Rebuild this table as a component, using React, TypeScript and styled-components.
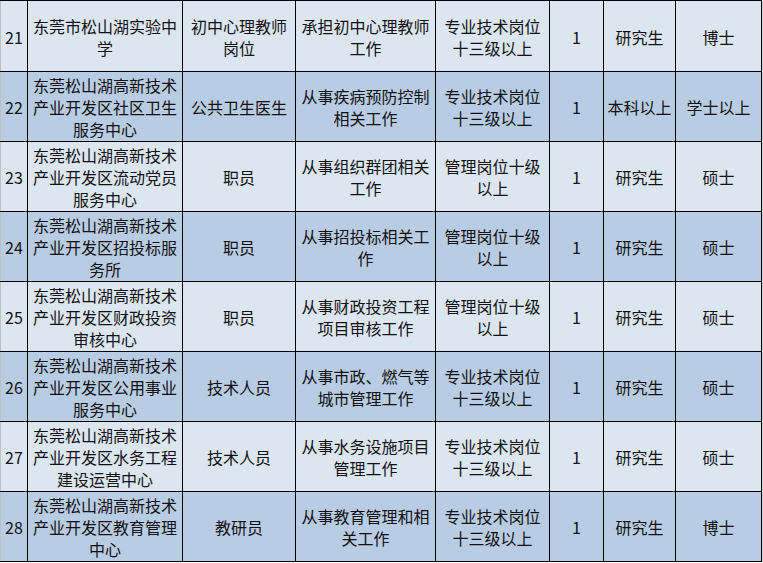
import React, { FC } from "react";
import styled, { createGlobalStyle } from "styled-components";

const GlobalStyle = createGlobalStyle`
  html, body {
    margin: 0;
    padding: 0;
    background: #ffffff;
  }
  body {
    font-family: "Noto Sans CJK SC", "Noto Sans", sans-serif;
    color: #111111;
  }
`;

const columns = "27px 155px 113px 140px 114px 54px 72px 87px";

const Sheet = styled.div`
  width: 763px;
  height: 563px;
  overflow: hidden;
  border-right: 1px solid #d4d4d4;
  box-sizing: border-box;
`;

const Row = styled.div<{ $alt: boolean }>`
  display: grid;
  grid-template-columns: ${columns};
  height: 70px;
  box-sizing: border-box;
  border-bottom: 1px solid #000;
  background: ${(props) => (props.$alt ? "#b8cce4" : "#dce6f1")};

  &:first-child {
    height: 72px;
    border-top: 1px solid #000;
  }
`;

const Cell = styled.div<{ $first?: boolean; $last?: boolean }>`
  display: flex;
  align-items: center;
  justify-content: center;
  text-align: center;
  box-sizing: border-box;
  padding: ${(props) => (props.$first ? "0" : "0 3px")};
  border-left: 1px solid ${(props) => (props.$first ? "#bfbfbf" : "#000")};
  border-right: ${(props) => (props.$last ? "1px solid #000" : "none")};
  font-size: 16px;
  line-height: 22px;
  padding-top: 1px;
  overflow: hidden;
`;

interface Job {
  no: number;
  unit: string;
  post: string;
  duty: string;
  level: string;
  count: string;
  edu: string;
  degree: string;
}

const jobs: Job[] = [
  { no: 21, unit: "东莞市松山湖实验中学", post: "初中心理教师岗位", duty: "承担初中心理教师工作", level: "专业技术岗位十三级以上", count: "1", edu: "研究生", degree: "博士" },
  { no: 22, unit: "东莞松山湖高新技术产业开发区社区卫生服务中心", post: "公共卫生医生", duty: "从事疾病预防控制相关工作", level: "专业技术岗位十三级以上", count: "1", edu: "本科以上", degree: "学士以上" },
  { no: 23, unit: "东莞松山湖高新技术产业开发区流动党员服务中心", post: "职员", duty: "从事组织群团相关工作", level: "管理岗位十级以上", count: "1", edu: "研究生", degree: "硕士" },
  { no: 24, unit: "东莞松山湖高新技术产业开发区招投标服务所", post: "职员", duty: "从事招投标相关工作", level: "管理岗位十级以上", count: "1", edu: "研究生", degree: "硕士" },
  { no: 25, unit: "东莞松山湖高新技术产业开发区财政投资审核中心", post: "职员", duty: "从事财政投资工程项目审核工作", level: "管理岗位十级以上", count: "1", edu: "研究生", degree: "硕士" },
  { no: 26, unit: "东莞松山湖高新技术产业开发区公用事业服务中心", post: "技术人员", duty: "从事市政、燃气等城市管理工作", level: "专业技术岗位十三级以上", count: "1", edu: "研究生", degree: "硕士" },
  { no: 27, unit: "东莞松山湖高新技术产业开发区水务工程建设运营中心", post: "技术人员", duty: "从事水务设施项目管理工作", level: "专业技术岗位十三级以上", count: "1", edu: "研究生", degree: "硕士" },
  { no: 28, unit: "东莞松山湖高新技术产业开发区教育管理中心", post: "教研员", duty: "从事教育管理和相关工作", level: "专业技术岗位十三级以上", count: "1", edu: "研究生", degree: "博士" },
];

const App: FC = () => {
  return (
    <>
      <GlobalStyle />
      <Sheet>
        {jobs.map((job, i) => (
          <Row key={job.no} $alt={i % 2 === 1}>
            <Cell $first>{job.no}</Cell>
            <Cell>{job.unit}</Cell>
            <Cell>{job.post}</Cell>
            <Cell>{job.duty}</Cell>
            <Cell>{job.level}</Cell>
            <Cell>{job.count}</Cell>
            <Cell>{job.edu}</Cell>
            <Cell $last>{job.degree}</Cell>
          </Row>
        ))}
      </Sheet>
    </>
  );
};

export default App;
